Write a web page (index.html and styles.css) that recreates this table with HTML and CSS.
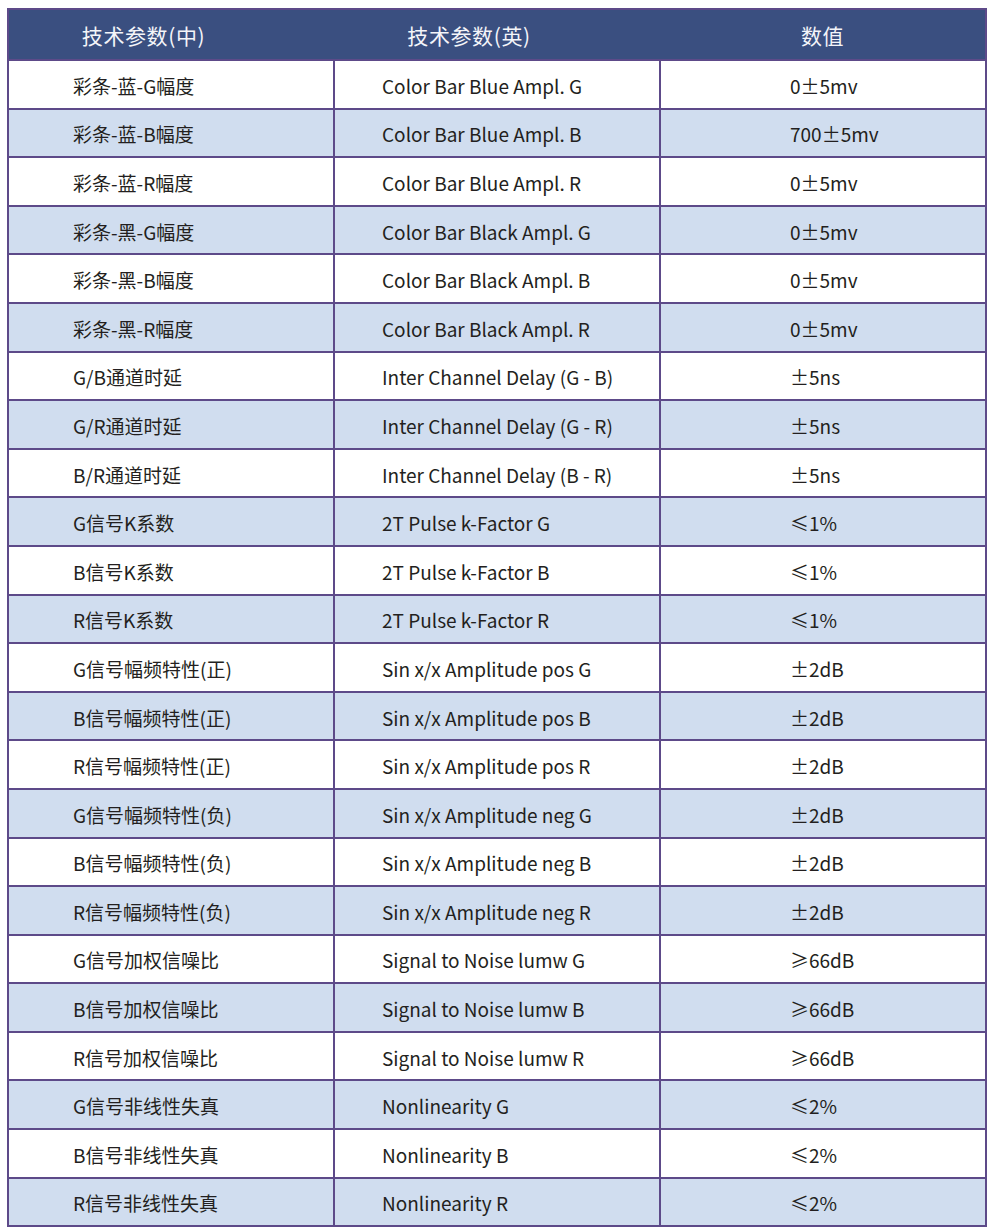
FILE: index.html
```html
<!DOCTYPE html>
<html lang="zh-CN">
<head>
<meta charset="utf-8">
<title>技术参数</title>
<link rel="stylesheet" href="styles.css">
</head>
<body>
<table class="spec">
  <colgroup><col class="c1"><col class="c2"><col class="c3"></colgroup>
  <thead>
    <tr><th class="h-shift">技术参数(中)</th><th class="h-shift">技术参数(英)</th><th>数值</th></tr>
  </thead>
  <tbody>
    <tr><td>彩条-蓝-G幅度</td><td>Color Bar Blue Ampl. G</td><td>0±5mv</td></tr>
    <tr><td>彩条-蓝-B幅度</td><td>Color Bar Blue Ampl. B</td><td>700±5mv</td></tr>
    <tr><td>彩条-蓝-R幅度</td><td>Color Bar Blue Ampl. R</td><td>0±5mv</td></tr>
    <tr><td>彩条-黑-G幅度</td><td>Color Bar Black Ampl. G</td><td>0±5mv</td></tr>
    <tr><td>彩条-黑-B幅度</td><td>Color Bar Black Ampl. B</td><td>0±5mv</td></tr>
    <tr><td>彩条-黑-R幅度</td><td>Color Bar Black Ampl. R</td><td>0±5mv</td></tr>
    <tr><td>G/B通道时延</td><td>Inter Channel Delay (G - B)</td><td>±5ns</td></tr>
    <tr><td>G/R通道时延</td><td>Inter Channel Delay (G - R)</td><td>±5ns</td></tr>
    <tr><td>B/R通道时延</td><td>Inter Channel Delay (B - R)</td><td>±5ns</td></tr>
    <tr><td>G信号K系数</td><td>2T Pulse k-Factor G</td><td>≤1%</td></tr>
    <tr><td>B信号K系数</td><td>2T Pulse k-Factor B</td><td>≤1%</td></tr>
    <tr><td>R信号K系数</td><td>2T Pulse k-Factor R</td><td>≤1%</td></tr>
    <tr><td>G信号幅频特性(正)</td><td>Sin x/x Amplitude pos G</td><td>±2dB</td></tr>
    <tr><td>B信号幅频特性(正)</td><td>Sin x/x Amplitude pos B</td><td>±2dB</td></tr>
    <tr><td>R信号幅频特性(正)</td><td>Sin x/x Amplitude pos R</td><td>±2dB</td></tr>
    <tr><td>G信号幅频特性(负)</td><td>Sin x/x Amplitude neg G</td><td>±2dB</td></tr>
    <tr><td>B信号幅频特性(负)</td><td>Sin x/x Amplitude neg B</td><td>±2dB</td></tr>
    <tr><td>R信号幅频特性(负)</td><td>Sin x/x Amplitude neg R</td><td>±2dB</td></tr>
    <tr><td>G信号加权信噪比</td><td>Signal to Noise lumw G</td><td>≥66dB</td></tr>
    <tr><td>B信号加权信噪比</td><td>Signal to Noise lumw B</td><td>≥66dB</td></tr>
    <tr><td>R信号加权信噪比</td><td>Signal to Noise lumw R</td><td>≥66dB</td></tr>
    <tr><td>G信号非线性失真</td><td>Nonlinearity G</td><td>≤2%</td></tr>
    <tr><td>B信号非线性失真</td><td>Nonlinearity B</td><td>≤2%</td></tr>
    <tr><td>R信号非线性失真</td><td>Nonlinearity R</td><td>≤2%</td></tr>
  </tbody>
</table>
</body>
</html>
```
FILE: styles.css
```css
html, body {
  margin: 0;
  padding: 0;
  background: #ffffff;
}
body {
  font-family: "Noto Sans CJK SC", "Noto Sans", sans-serif;
  color: #231f20;
}
.spec {
  margin: 8px 0 0 7px;
  width: 980px;
  border-collapse: collapse;
  table-layout: fixed;
  border: 2px solid #5d4a89;
}
.spec col { width: 33.33%; }
.spec th {
  background: #3a4f80;
  color: #f4f5f9;
  font-weight: 400;
  font-size: 21px;
  letter-spacing: 0.6px;
  height: 49px;
  padding: 0;
  text-align: center;
  border: 2px solid #5d4a89;
  border-right: none;
  border-left: none;
}
.spec th.h-shift { padding-right: 56px; }
.spec th:first-child { border-left: 2px solid #5d4a89; }
.spec th:last-child { border-right: 2px solid #5d4a89; padding-left: 0; }
.spec td {
  font-size: 19px;
  height: 44.6px;
  padding: 2px 0 0 0;
  border: 2px solid #5d4a89;
  text-align: left;
  white-space: nowrap;
}
.spec td:nth-child(1) { padding-left: 64px; }
.spec td:nth-child(2) { padding-left: 47px; }
.spec td:nth-child(3) { padding-left: 129px; }
.spec tbody tr:nth-child(even) td { background: #d0ddef; }
```
